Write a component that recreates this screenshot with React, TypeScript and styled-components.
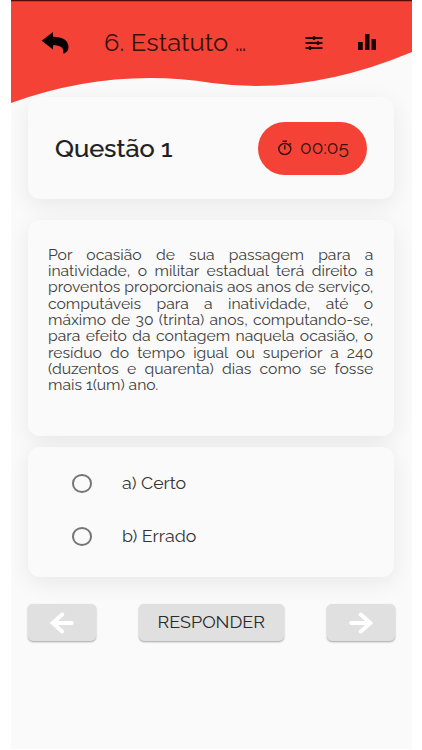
import React from 'react';
import styled, { createGlobalStyle } from 'styled-components';

const GlobalStyle = createGlobalStyle`
  * { box-sizing: border-box; }
  body { margin: 0; background: #fff; font-family: Raleway, Lato, "Open Sans", sans-serif; }
`;

const Screen = styled.main`
  width: 401px;
  height: 749px;
  margin-left: 11px;
  background: #fafafa;
  overflow: hidden;
  isolation: isolate;
`;

const Header = styled.header`
  position: relative;
  z-index: 2;
  height: 97px;
`;

const Wave = styled.svg`
  position: absolute;
  inset: 0 auto auto 0;
`;

const Toolbar = styled.div`
  position: relative;
  display: flex;
  align-items: center;
  height: 84px;
  padding: 0 34px 0 30px;
`;

const Title = styled.h1`
  width: 150px;
  margin: 1px 51px 0 34px;
  font-size: 24px;
  font-weight: 400;
  line-height: 30px;
  white-space: nowrap;
  color: #37110e;
  transform: scaleX(1.065);
  transform-origin: left;
`;

const BarsIcon = styled.svg`
  margin-left: 34px;
`;

const Cards = styled.div`
  padding: 0 18px 0 17px;
`;

const Card = styled.section<{ $height: number; $gap: number }>`
  height: ${p => p.$height}px;
  margin-bottom: ${p => p.$gap}px;
  border-radius: 12px;
  background: #fafafa;
  box-shadow: 0 6px 22px rgba(0, 0, 0, 0.075);
`;

const HeadingCard = styled(Card)`
  display: flex;
  align-items: center;
  justify-content: space-between;
  padding: 0 27px;
`;

const Heading = styled.h2`
  margin: 2px 0 0;
  font-size: 23.8px;
  font-weight: 500;
  color: #202020;
  transform: scaleX(1.065);
  transform-origin: left;
  -webkit-text-stroke: 0.2px #202020;
`;

const Timer = styled.div`
  display: flex;
  align-items: center;
  width: 109px;
  height: 53px;
  padding-left: 19px;
  gap: 6.5px;
  border-radius: 27px;
  background: #f44336;
  color: #37110e;
  font-size: 17.8px;
`;

const WideText = styled.span<{ $origin?: string }>`
  display: inline-block;
  margin-bottom: 2px;
  transform: scaleX(1.07);
  transform-origin: ${p => p.$origin ?? 'left'};
`;

const QuestionCard = styled(Card)`
  padding: 26.5px 0 0 20px;
`;

const Question = styled.div`
  width: 304.5px;
  font-size: 14.7px;
  line-height: 16.35px;
  color: #404040;
  transform: scaleX(1.068);
  transform-origin: left;
`;

const Line = styled.div<{ $last?: boolean }>`
  white-space: nowrap;
  text-align-last: ${p => (p.$last ? 'left' : 'justify')};
`;

const AnswersCard = styled(Card)`
  padding-top: 10px;
`;

const Option = styled.label`
  display: flex;
  align-items: center;
  height: 53px;
  padding-left: 44px;
  gap: 30px;
  color: #333;
  font-size: 16.6px;
`;

const Radio = styled.span`
  width: 20px;
  height: 18.5px;
  border: 2px solid #757575;
  border-radius: 50%;
`;

const Actions = styled.footer`
  display: flex;
  justify-content: space-between;
  padding: 0 17px;
`;

const Button = styled.button<{ $width: number }>`
  display: flex;
  align-items: center;
  justify-content: center;
  width: ${p => p.$width}px;
  height: 37px;
  padding: 0;
  border: 0;
  border-radius: 5px;
  background: #e0e0e0;
  box-shadow: 0 1px 2px rgba(0, 0, 0, 0.35);
  color: #2b2b2b;
  font: 400 16.8px Raleway, Lato, sans-serif;
`;

const Arrow = ({ flip = false }: { flip?: boolean }) => (
  <svg width="24" height="23" viewBox="0 0 24 23" fill="none" stroke="#fff" strokeWidth="4" strokeLinecap="round">
    <path d={flip ? 'M2.2 12H21M11.8 3.6L21.2 12L11.8 20.4' : 'M21.8 12H3M12.2 3.6L2.8 12L12.2 20.4'} />
  </svg>
);

export default function App() {
  return (
    <>
      <GlobalStyle />
      <Screen>
        <Header>
          <Wave width="401" height="104" viewBox="0 0 401 104">
            <path d="M0 0H401V52Q296 96 201 83Q100 67 0 103Z" fill="#f44336" />
            <path d="M0 0H401V1.2H0Z" fill="#510d08" />
          </Wave>
          <Toolbar>
            <svg width="29" height="24" viewBox="0 0 29 24">
              <path d="M0.7 10.7L12 2V6.7C21 6.6 27.5 10 27.5 17C27.5 20 26 22.3 23.2 23.4Q22.2 23.7 22.2 22.5C23.1 17.5 19 15.2 12 15.3V19.6Z" fill="#080100" />
            </svg>
            <Title>6. Estatuto …</Title>
            <svg width="18" height="16" viewBox="0 0 18 16">
              <path d="M.5 4H17.5M.5 9H17.5M.5 14H17.5" stroke="#240705" strokeWidth="1.9" />
              <path d="M9 2V6M13 7V11M5 12V16" stroke="#240705" strokeWidth="2.2" />
            </svg>
            <BarsIcon width="20" height="18" viewBox="0 0 20 18">
              <path d="M1 9H5.8V17H1ZM8 1H12.5V17H8ZM14.5 6H19V17H14.5Z" fill="#180403" />
            </BarsIcon>
          </Toolbar>
        </Header>
        <Cards>
          <HeadingCard $height={102} $gap={21}>
            <Heading>Questão 1</Heading>
            <Timer>
              <svg width="16" height="16" viewBox="0 0 16 16" fill="none" stroke="#37110e" strokeWidth="1.5">
                <ellipse cx="7.8" cy="9" rx="6" ry="5.5" />
                <path d="M5.5 1.2H10M7.8 5.3V9.5M12.5 3.3L14 4.5" />
              </svg>
              <WideText>00:05</WideText>
            </Timer>
          </HeadingCard>
          <QuestionCard $height={216} $gap={11}>
            <Question>
              <Line>Por ocasião de sua passagem para a</Line>
              <Line>inatividade, o militar estadual terá direito a</Line>
              <Line>proventos proporcionais aos anos de serviço,</Line>
              <Line>computáveis para a inatividade, até o</Line>
              <Line>máximo de 30 (trinta) anos, computando-se,</Line>
              <Line>para efeito da contagem naquela ocasião, o</Line>
              <Line>resíduo do tempo igual ou superior a 240</Line>
              <Line>(duzentos e quarenta) dias como se fosse</Line>
              <Line $last>mais 1(um) ano.</Line>
            </Question>
          </QuestionCard>
          <AnswersCard $height={130} $gap={27}>
            <Option><Radio /><WideText>a) Certo</WideText></Option>
            <Option><Radio /><WideText>b) Errado</WideText></Option>
          </AnswersCard>
        </Cards>
        <Actions>
          <Button $width={68}><Arrow /></Button>
          <Button $width={145}><WideText $origin="center">RESPONDER</WideText></Button>
          <Button $width={68}><Arrow flip /></Button>
        </Actions>
      </Screen>
    </>
  );
}
